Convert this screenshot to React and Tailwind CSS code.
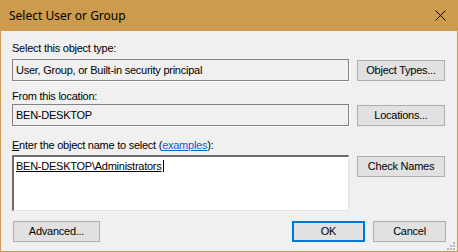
import React from "react";

const font = { fontFamily: '"Liberation Sans", Arial, sans-serif' };

function Btn({ children, className = "" }) {
  return (
    <div
      className={
        "flex items-center justify-center bg-[#e1e1e1] border border-[#adadad] text-[11px] tracking-[-0.25px] text-black " +
        className
      }
    >
      {children}
    </div>
  );
}

function ReadBox({ children }) {
  return (
    <div className="w-[337px] h-[22px] border border-[#828282] shadow-[1px_1px_0_#ffffff] bg-[#f0f0f0] flex items-center pl-[3px] text-[11px] tracking-[-0.25px] text-black">
      {children}
    </div>
  );
}

export default function App() {
  return (
    <div
      className="relative w-[458px] h-[252px] bg-[#f0f0f0] border-x border-b border-[#cc9b4e] flex flex-col overflow-hidden"
      style={font}
    >
      <div className="h-[31px] shrink-0 bg-[#cc9b4e] flex items-center justify-between pl-[8px] pr-[11px]">
        <span
          className="text-[12px] text-black"
          style={{ fontFamily: '"Noto Sans", "Open Sans", sans-serif' }}
        >
          Select User or Group
        </span>
        <svg width="11" height="11" viewBox="0 0 11 11">
          <path d="M0.5 0.5 L10.5 10.5 M10.5 0.5 L0.5 10.5" stroke="#000" strokeWidth="1" />
        </svg>
      </div>
      <div className="flex flex-col pl-[11px] pr-[11px] text-[11px] tracking-[-0.25px]">
        <div className="mt-[10px] h-[14px] leading-[14px] text-black">
          Select this object type:
        </div>
        <div className="mt-[4px] flex items-start">
          <ReadBox>User, Group, or Built-in security principal</ReadBox>
          <Btn className="ml-[8px] mt-[1px] w-[88px] h-[21px]">Object Types...</Btn>
        </div>
        <div className="mt-[8px] h-[14px] leading-[14px] text-black">
          From this location:
        </div>
        <div className="mt-[1px] flex items-start">
          <ReadBox>BEN-DESKTOP</ReadBox>
          <Btn className="ml-[8px] mt-[1px] w-[88px] h-[21px]">Locations...</Btn>
        </div>
        <div className="mt-[12px] h-[14px] leading-[14px] text-black">
          <span className="underline">E</span>nter the object name to select (
          <span className="text-[#0066cc] underline">examples</span>):
        </div>
        <div className="mt-[3px] flex items-start">
          <div className="w-[337px] h-[56px] bg-white border-t-2 border-l-2 border-t-[#6d6d6d] border-l-[#6d6d6d] border-r border-b border-r-[#e3e3e3] border-b-[#e3e3e3] pl-[2px] pt-[2px] text-black leading-[14px]">
            <span className="underline border-r border-black pr-[1px]">
              BEN-DESKTOP\Administrators
            </span>
          </div>
          <Btn className="ml-[8px] mt-[1px] w-[88px] h-[21px]">Check Names</Btn>
        </div>
        <div className="mt-[10px] flex items-start">
          <Btn className="ml-[1px] w-[87px] h-[21px]">Advanced...</Btn>
          <div className="flex-1" />
          <Btn className="w-[73px] h-[21px] !border-2 !border-[#0078d7]">OK</Btn>
          <Btn className="ml-[8px] w-[73px] h-[21px]">Cancel</Btn>
        </div>
      </div>
      <svg className="absolute right-[2px] bottom-[1px]" width="8" height="8" viewBox="0 0 8 8">
        <rect x="6" y="0" width="2" height="2" fill="#b8b8b8" />
        <rect x="3" y="3" width="2" height="2" fill="#b8b8b8" />
        <rect x="6" y="3" width="2" height="2" fill="#b8b8b8" />
        <rect x="0" y="6" width="2" height="2" fill="#b8b8b8" />
        <rect x="3" y="6" width="2" height="2" fill="#b8b8b8" />
        <rect x="6" y="6" width="2" height="2" fill="#b8b8b8" />
      </svg>
    </div>
  );
}
